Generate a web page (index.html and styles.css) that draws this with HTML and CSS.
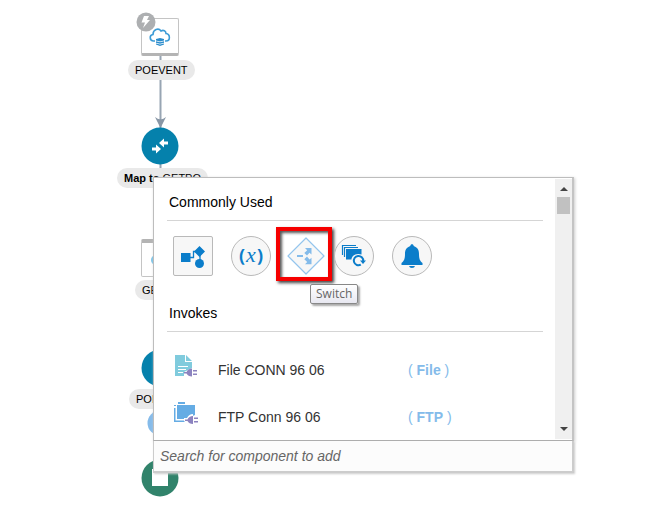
FILE: index.html
```
<!DOCTYPE html>
<html lang="en">
<head>
<meta charset="utf-8">
<title>Integration flow</title>
<link rel="stylesheet" href="styles.css">
</head>
<body>
<main class="canvas">
  <svg class="wires" width="20" height="190" viewBox="0 0 20 190" aria-hidden="true">
    <path d="M10.500 48V120M10.500 155V166" stroke="#98a5b3" stroke-width="2" fill="none"/>
    <path d="M5 109Q9 112 10.500 111Q12 112 16 109L10.500 120Z" fill="#8997a6"/>
  </svg>

  <div class="node box trigger">
    <svg width="22" height="19" viewBox="0 0 22 19" aria-hidden="true">
      <path d="M6 14H4.500C.5 14 0 8 4 7.500C4 2.500 9.500.5 12 4C14.500 2.500 17 4 17 6.500C21.500 7 21.500 14 17 14H16" fill="none" stroke="#3c9bd6" stroke-width="1.600"/>
      <path d="M7 12L11 11L15 12V13.500L11 14.500L7 13.500ZM7 14.300L11 15.300L15 14.300V15.700L11 16.700L7 15.700ZM7 16.500L11 17.500L15 16.500V17.500L11 19L7 17.500Z" fill="#2b8ccc"/>
    </svg>
  </div>
  <svg class="node bolt" width="20" height="20" viewBox="0 0 20 20" aria-hidden="true">
    <circle cx="10" cy="10" r="9.500" fill="#adafb1"/>
    <path d="M8 4H13L11 8H14L7 16L9 10.500H5.500Z" fill="#fff"/>
  </svg>
  <span class="node label label-event">POEVENT</span>

  <svg class="node map-one" width="38" height="38" viewBox="0 0 38 38" aria-hidden="true">
    <circle cx="19" cy="19" r="18.500" fill="#0581ac"/>
    <path d="M11 20.500H15V17.500L20 22L15 26.500V23.500H11ZM27 14.500H23V11.500L18 16L23 20.500V17.500H27Z" fill="#fff"/>
  </svg>
  <span class="node label label-map"><b>Map to</b> GETPO</span>

  <div class="node box invoke">
    <svg width="20" height="20" viewBox="0 0 20 20" aria-hidden="true"><circle cx="6" cy="10" r="5" fill="#78c4ea"/></svg>
  </div>
  <span class="node label label-get">GETPO</span>
  <svg class="node map-two" width="38" height="38" viewBox="0 0 38 38" aria-hidden="true">
    <circle cx="19" cy="19" r="18.500" fill="#0581ac"/>
  </svg>
  <span class="node label label-po">POEVENT</span>
  <svg class="node add" width="26" height="26" viewBox="0 0 26 26" aria-hidden="true"><circle cx="13" cy="13" r="12.500" fill="#85bbea"/></svg>
  <svg class="node end" width="38" height="38" viewBox="0 0 38 38" aria-hidden="true">
    <circle cx="19" cy="19" r="18.500" fill="#31836b"/><path d="M11 10H27V27H11Z" fill="#fff"/>
  </svg>

  <section class="picker" aria-label="Add component">
    <div class="list">
      <div class="content">
        <h2>Commonly Used</h2>
        <div class="tools">
          <button class="tool square" aria-label="Action">
            <svg width="38" height="38" viewBox="0 0 38 38">
              <path d="M15 20.500H19.500V14.500H23M26 14V25" fill="none" stroke="#0b7dca" stroke-width="1.300"/>
              <path d="M7 16H16.500V25H7ZM25.500 9L31 14.500L25.500 20L20 14.500Z" fill="#0b7dca"/>
              <circle cx="25.500" cy="26.500" r="4.500" fill="#0b7dca"/>
            </svg>
          </button>
          <button class="tool round variable" aria-label="Assign">(<i>x</i>)</button>
          <button class="tool diamond" aria-label="Switch">
            <svg width="40" height="40" viewBox="0 0 40 40">
              <path d="M20 2L38 20L20 38L2 20Z" fill="#f7f7f7" stroke="#94c5ed" stroke-width="1.200" stroke-linejoin="round"/>
              <path d="M11 20H17" stroke="#84bbea" stroke-width="2"/>
              <path d="M19 12H25.500V18.500L23.500 16.800L21 19.500L18.300 17L21.200 14.300ZM21 20.500L23.500 23.500L25.500 21.800V28.300H19L21.200 26L18.300 23.200Z" fill="#84bbea"/>
            </svg>
            <span class="marker"></span>
          </button>
          <button class="tool round" aria-label="For each">
            <svg width="38" height="38" viewBox="0 0 38 38">
              <path d="M7.500 18V8.500H21M9.500 20V10.500H23" fill="none" stroke="#0b7dca" stroke-width="1.200"/>
              <path d="M11 12H26.500V17.500C21 15.500 16.500 19 16.500 22.500H11Z" fill="#0b7dca"/>
              <path d="M25.800 27.700A4.700 4.700 0 1 1 28.200 24" fill="none" stroke="#0b7dca" stroke-width="2"/>
              <path d="M25 23.500H31L28 27Z" fill="#0b7dca"/>
            </svg>
          </button>
          <button class="tool round" aria-label="Notification">
            <svg width="38" height="38" viewBox="0 0 38 38">
              <path d="M17.300 9C17.300 6.500 20.700 6.500 20.700 9C25 10.500 26 13.500 26 17C26 22 27 24 29.500 26V28H8.500V26C11 24 12 22 12 17C12 13.500 13 10.500 17.300 9ZM16 29H22Q21.500 31 19 31Q16.500 31 16 29Z" fill="#0b7dca"/>
            </svg>
          </button>
        </div>
        <h2>Invokes</h2>
        <ul class="connections">
          <li>
            <svg width="26" height="32" viewBox="0 0 26 32" aria-hidden="true">
              <path d="M2 1H12V8H19V14L11 18V22H2ZM13 1L19 7H13Z" fill="#80cbdd"/>
              <path d="M5 12.500H15M5 15.500H13M5 18.500H10" stroke="#fff"/>
              <path d="M11 18H13.500Q15 14.500 19 14.500V22.500Q15 22.500 13.500 19.500H11ZM20 16H24V17.500H20ZM20 19.500H24V21H20Z" fill="#8c83bf"/>
            </svg>
            <span>File CONN 96 06</span><span class="kind">( <b>File</b> )</span>
          </li>
          <li>
            <svg width="26" height="32" viewBox="0 0 26 32" aria-hidden="true">
              <path d="M5 1H12V3H5ZM4 4H22V14L13 18H4ZM1 4H3V5H1ZM1 7H2.500V19.500H12V21H1Z" fill="#65ace4"/>
              <path d="M11 17H14Q16 13 20 13V24Q16 23.500 13 20.500H11Z" fill="#fff"/>
              <path d="M12 18.500H14.500Q16 15 20 15V23Q16 23 14.500 20H12ZM21 16.500H25V18H21ZM21 20H25V21.500H21Z" fill="#8c83bf"/>
            </svg>
            <span>FTP Conn 96 06</span><span class="kind">( <b>FTP</b> )</span>
          </li>
        </ul>
      </div>
      <div class="scrollbar" aria-hidden="true">
        <svg width="8" height="4" viewBox="0 0 8 4"><path d="M0 4L4 0L8 4Z" fill="#444"/></svg>
        <div class="thumb"></div>
        <svg class="down" width="8" height="4" viewBox="0 0 8 4"><path d="M0 0L4 4L8 0Z" fill="#444"/></svg>
      </div>
    </div>
    <input class="search" type="text" aria-label="Search for component to add" placeholder="Search for component to add">
    <span class="tooltip" role="tooltip">Switch</span>
  </section>
</main>
</body>
</html>
```
FILE: styles.css
```
* { box-sizing: border-box; }
body {
  margin: 0;
  background: #fff;
  color: #000;
  font: 14px/20px "Liberation Sans", Arial, sans-serif;
}
.canvas { position: relative; min-height: 100vh; overflow: hidden; }
.wires { position: absolute; left: 150px; top: 8px; }

.node { position: absolute; }
.box {
  display: flex;
  align-items: center;
  justify-content: center;
  width: 38px;
  height: 38px;
  border: 1px solid #c4c4c4;
  border-radius: 2px;
  background: #fff;
}
.trigger { left: 141px; top: 18px; border-bottom: 3px solid #b4b4b4; }
.bolt { left: 136px; top: 12px; }
.invoke { left: 141px; top: 239px; border-top: 4px solid #b4b4b4; }
.map-one { left: 141px; top: 127px; }
.map-two { left: 141px; top: 349px; }
.add { left: 147px; top: 410px; }
.end { left: 141px; top: 459px; }
.label {
  padding: 0 7px;
  border-radius: 10px;
  background: #e9e9e9;
  font-size: 11px;
  white-space: nowrap;
}
.label-event { left: 128px; top: 60px; }
.label-map { left: 117px; top: 168px; }
.label-get { left: 135px; top: 280px; }
.label-po { left: 129px; top: 389px; }

.picker {
  position: absolute;
  left: 153px;
  top: 177px;
  width: 421px;
}
.list {
  display: flex;
  border: 1px solid #bdbdbd;
  border-right: 2px solid #c4c4c4;
  border-bottom-color: #ababab;
  background: #fff;
  box-shadow: 1px 1px 3px #ccc;
}
.content { flex: 1; padding: 14px 12px 0 13px; }
h2 {
  margin: 0;
  padding: 0 2px 8px;
  border-bottom: 1px solid #d5d5d5;
  font-size: 14px;
  font-weight: normal;
}
.tools {
  display: grid;
  grid-template-columns: 58px 55px 48px 58px 40px;
  padding: 15px 6px 27px;
}
.tool {
  position: relative;
  display: flex;
  align-items: center;
  justify-content: center;
  width: 40px;
  height: 40px;
  padding: 0;
  border: 1px solid #b9b9b9;
  background: #f7f7f7;
}
.tool svg { flex: none; }
.square { border-radius: 2px; }
.round { border-radius: 50%; }
.diamond { border: 0; background: none; }
.variable {
  gap: 1px;
  padding-bottom: 2px;
  color: #0b7dca;
  font: bold 18px/20px "Open Sans", sans-serif;
}
.variable i { font: italic 22px/20px "Liberation Serif", serif; }
.marker {
  position: absolute;
  inset: -9px -6px -5px -10px;
  border: 4px solid #f60000;
  box-shadow: 2px 2px 3px #444, inset 2px 2px 3px #555;
}
.connections { margin: 0; padding: 14px 6px 0; list-style: none; }
.connections li {
  display: grid;
  grid-template-columns: 45px 190px auto;
  align-items: center;
  height: 47px;
  color: #333;
}
.kind { color: #84bbea; }

.scrollbar {
  display: flex;
  flex-direction: column;
  align-items: center;
  width: 17px;
  margin: 1px 0;
  padding: 8px 0;
  background: #f0f0f0;
}
.thumb { width: 13px; height: 17px; margin-top: 6px; background: #c1c1c1; }
.down { margin-top: auto; }

.search {
  display: block;
  width: 100%;
  height: 32px;
  padding: 0 6px;
  border: solid #ccc;
  border-width: 0 2px 2px 1px;
  border-radius: 0;
  background: #fcfcfc;
  box-shadow: 1px 1px 2px #ccc;
  font: italic 14px "Liberation Sans", Arial, sans-serif;
}
.search::placeholder { color: #666; opacity: 1; }

.tooltip {
  position: absolute;
  left: 157px;
  top: 107px;
  padding: 0 5px;
  border: 1px solid #888;
  border-radius: 2px;
  background: linear-gradient(#fff, #e8e8f1);
  box-shadow: 2px 2px 2px #aaa;
  color: #666;
  font: 12px/18px "Open Sans", sans-serif;
}
```
